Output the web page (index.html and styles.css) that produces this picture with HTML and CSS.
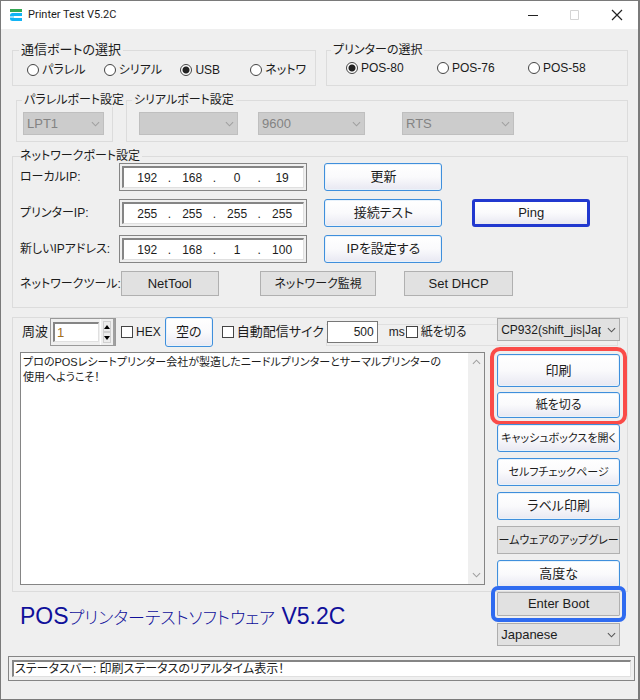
FILE: index.html
```html
<!DOCTYPE html>
<html lang="ja">
<head>
<meta charset="utf-8">
<meta name="viewport" content="width=device-width, initial-scale=1">
<title>Printer Test V5.2C</title>
<link rel="stylesheet" href="styles.css">
</head>
<body>
<div class="window">
  <header class="titlebar">
    <svg class="app-icon" width="12" height="12" viewBox="0 0 12 12" aria-hidden="true">
      <rect x="0" y="0" width="12" height="3" fill="#34a853"/>
      <path d="M2.500 4H12v3H4v2h8v3H2.500A2.500 2.500 0 0 1 0 9.500v-3A2.500 2.500 0 0 1 2.500 4z" fill="#12b4f5"/>
      <path d="M0 7h4v2H0z" fill="#9be0fb"/>
    </svg>
    <h1 class="caption">Printer Test V5.2C</h1>
    <div class="window-buttons">
      <button type="button" class="winbtn" aria-label="最小化"><svg width="12" height="12" viewBox="0 0 12 12"><path d="M1 6.500h10" stroke="#222"/></svg></button>
      <button type="button" class="winbtn" aria-label="最大化" disabled><svg width="12" height="12" viewBox="0 0 12 12"><path d="M1.500 1.500h8v9h-8z" fill="none" stroke="#d4d4d4"/></svg></button>
      <button type="button" class="winbtn" aria-label="閉じる"><svg width="12" height="12" viewBox="0 0 12 12"><path d="M1 1l10 10M11 1L1 11" stroke="#222" stroke-width="1.200"/></svg></button>
    </div>
  </header>

  <main class="content">
    <div class="row row-top">
      <fieldset class="group radios ports">
        <legend>通信ポートの選択</legend>
        <label><input type="radio" name="port">パラレル</label>
        <label><input type="radio" name="port">シリアル</label>
        <label><input type="radio" name="port" checked>USB</label>
        <label><input type="radio" name="port">ネットワ</label>
      </fieldset>
      <fieldset class="group radios printers">
        <legend>プリンターの選択</legend>
        <label><input type="radio" name="printer" checked>POS-80</label>
        <label><input type="radio" name="printer">POS-76</label>
        <label><input type="radio" name="printer">POS-58</label>
      </fieldset>
    </div>

    <div class="row row-ports">
      <fieldset class="group parallel">
        <legend>パラレルポート設定</legend>
        <span class="combo"><select aria-label="パラレルポート" disabled><option>LPT1</option></select><svg class="chevron" viewBox="0 0 10 6"><path d="M1 1l4 4 4-4"/></svg></span>
      </fieldset>
      <fieldset class="group serial">
        <legend>シリアルポート設定</legend>
        <span class="combo"><select aria-label="シリアルポート" disabled><option></option></select><svg class="chevron" viewBox="0 0 10 6"><path d="M1 1l4 4 4-4"/></svg></span>
        <span class="combo baud"><select aria-label="ボーレート" disabled><option>9600</option></select><svg class="chevron" viewBox="0 0 10 6"><path d="M1 1l4 4 4-4"/></svg></span>
        <span class="combo flow"><select aria-label="フロー制御" disabled><option>RTS</option></select><svg class="chevron" viewBox="0 0 10 6"><path d="M1 1l4 4 4-4"/></svg></span>
      </fieldset>
    </div>

    <fieldset class="group network">
      <legend>ネットワークポート設定</legend>
      <div class="net-row">
        <label for="local1">ローカルIP:</label>
        <div class="ip"><div class="ip-inner"><input id="local1" value="192"><i>.</i><input aria-label="ローカルIP 2" value="168"><i>.</i><input aria-label="ローカルIP 3" value="0"><i>.</i><input aria-label="ローカルIP 4" value="19"></div></div>
        <button type="button" class="btn set">更新</button>
      </div>
      <div class="net-row">
        <label for="printer1">プリンターIP:</label>
        <div class="ip"><div class="ip-inner"><input id="printer1" value="255"><i>.</i><input aria-label="プリンターIP 2" value="255"><i>.</i><input aria-label="プリンターIP 3" value="255"><i>.</i><input aria-label="プリンターIP 4" value="255"></div></div>
        <button type="button" class="btn set">接続テスト</button>
        <button type="button" class="btn ping">Ping</button>
      </div>
      <div class="net-row">
        <label for="new1">新しいIPアドレス:</label>
        <div class="ip"><div class="ip-inner"><input id="new1" value="192"><i>.</i><input aria-label="新しいIPアドレス 2" value="168"><i>.</i><input aria-label="新しいIPアドレス 3" value="1"><i>.</i><input aria-label="新しいIPアドレス 4" value="100"></div></div>
        <button type="button" class="btn set">IPを設定する</button>
      </div>
      <div class="tool-row">
        <span>ネットワークツール:</span>
        <button type="button" class="flat">NetTool</button>
        <button type="button" class="flat monitor">ネットワーク監視</button>
        <button type="button" class="flat dhcp">Set DHCP</button>
      </div>
    </fieldset>

    <section class="panel columns">
      <div class="editor">
        <div class="toolbar">
          <label class="times" for="times">周波</label>
          <div class="spinner">
            <input id="times" value="1">
            <div class="arrows">
              <button type="button" aria-label="増やす"><svg width="6" height="4" viewBox="0 0 6 4"><path d="M0 4l3-4 3 4z"/></svg></button>
              <button type="button" aria-label="減らす"><svg width="6" height="4" viewBox="0 0 6 4"><path d="M0 0l3 4 3-4z"/></svg></button>
            </div>
          </div>
          <label class="check hex"><input type="checkbox">HEX</label>
          <button type="button" class="btn clear">空の</button>
          <label class="check auto"><input type="checkbox">自動配信サイク</label>
          <input class="interval" aria-label="自動配信サイクル" value="500">
          <span class="unit">ms</span>
          <label class="check cut"><input type="checkbox">紙を切る</label>
        </div>
        <div class="memo">
          <textarea aria-label="印刷テキスト">プロのPOSレシートプリンター会社が製造したニードルプリンターとサーマルプリンターの
使用へようこそ！</textarea>
          <div class="scrollbar">
            <svg viewBox="0 0 10 6"><path d="M1 5l4-4 4 4"/></svg>
            <svg viewBox="0 0 10 6"><path d="M1 1l4 4 4-4"/></svg>
          </div>
        </div>
      </div>
      <div class="actions">
        <span class="combo active codepage"><select aria-label="コードページ"><option>CP932(shift_jis|Japanese)</option></select><svg class="chevron" viewBox="0 0 10 6"><path d="M1 1l4 4 4-4"/></svg></span>
        <div class="marked">
          <button type="button" class="btn print">印刷</button>
          <button type="button" class="btn cutter">紙を切る</button>
        </div>
        <button type="button" class="btn compact">キャッシュボックスを開く</button>
        <button type="button" class="btn compact">セルフチェックページ</button>
        <button type="button" class="btn">ラベル印刷</button>
        <button type="button" class="flat compact">ームウェアのアップグレー</button>
        <button type="button" class="btn">高度な</button>
      </div>
    </section>

    <section class="bottom columns">
      <h2 class="product">POS<span>プリンターテストソフトウェア</span> V5.2C</h2>
      <div class="boot">
        <button type="button" class="flat enter">Enter Boot</button>
        <span class="combo active"><select aria-label="言語"><option>Japanese</option></select><svg class="chevron" viewBox="0 0 10 6"><path d="M1 1l4 4 4-4"/></svg></span>
      </div>
    </section>
  </main>

  <footer class="status"><output>ステータスバー: 印刷ステータスのリアルタイム表示！</output></footer>
</div>
</body>
</html>
```
FILE: styles.css
```css
* { box-sizing: border-box; }

body {
  margin: 0;
  background: #efefef;
  color: #1c1c1c;
  font: 13px/14px "Liberation Sans", "Noto Sans CJK JP", sans-serif;
  font-feature-settings: "palt";
}

button, input, select, textarea {
  margin: 0;
  padding: 0;
  font: inherit;
  font-feature-settings: inherit;
  color: inherit;
}

.window {
  display: flex;
  flex-direction: column;
  min-height: 100vh;
  border: 1px solid #7a7a7a;
  border-right-width: 2px;
}

.titlebar {
  display: flex;
  align-items: center;
  height: 28px;
  padding-left: 9px;
  background: #fff;
}
.caption {
  flex: 1;
  margin: 0 0 0 6px;
  font: 11px/16px Roboto, sans-serif;
}
.window-buttons { display: flex; }
.winbtn {
  display: grid;
  place-items: center;
  width: 42px;
  height: 28px;
  border: 0;
  background: none;
}

.content { padding: 14px 10px 0 11px; }
.row { display: grid; margin-bottom: 7px; }
.row-top { grid-template-columns: 304fr 302fr; gap: 10px; }
.row-ports { grid-template-columns: 97fr 502fr; gap: 13px; padding-left: 4px; }

.group {
  min-width: 0;
  margin: 0;
  padding: 0;
  border: 1px solid #dcdcdc;
}
legend {
  padding: 0 2px;
  background: #efefef;
  font-size: 12px;
  line-height: 14px;
  white-space: nowrap;
}

.radios { display: grid; height: 43px; font-size: 12px; }
.radios label { display: flex; align-items: center; gap: 3px; white-space: nowrap; }
.ports { grid-template-columns: 77fr 77fr 70fr 65fr; padding-left: 14px; padding-bottom: 3px; }
.ports legend { margin-left: -8px; font-size: 13px; }
.printers { grid-template-columns: repeat(3, 1fr); padding: 0 8px 6px 19px; }
.printers legend { margin-left: -15px; }

input[type="radio"], input[type="checkbox"] {
  flex: none;
  appearance: none;
  width: 12px;
  height: 12px;
  border: 1px solid #444;
  background: #fff;
}
input[type="radio"] { border-radius: 50%; }
input[type="radio"]:checked { background: radial-gradient(circle, #222 3px, #fff 4px); }

.combo { position: relative; display: block; height: 23px; }
.combo select {
  appearance: none;
  display: block;
  width: 100%;
  height: 100%;
  padding: 0 18px 0 3px;
  border: 1px solid #bfbfbf;
  border-radius: 0;
  background: #cccccc;
  color: #838383;
  opacity: 1;
}
.combo.active select { border-color: #adadad; background: #e1e1e1; color: #1c1c1c; }
.codepage { font-size: 12px; }
.chevron {
  position: absolute;
  right: 4px;
  top: 9px;
  width: 9px;
  height: 6px;
  pointer-events: none;
}
.chevron path, .scrollbar path { fill: none; stroke: #a0a0a0; stroke-width: 1.2; }
.active .chevron path { stroke: #555; }

.parallel, .serial { height: 49px; }
.parallel { padding: 5px 8px 0 6px; }
.parallel legend { margin-left: -1px; }
.serial {
  display: grid;
  grid-template-columns: 99fr 20fr 107fr 37fr 112fr 113fr;
  padding: 5px 0 0 12px;
}
.serial legend { margin-left: -7px; }
.baud { grid-column: 3; }
.flow { grid-column: 5; }

.network { height: 159px; margin-bottom: 9px; padding: 0 7px; }
.network legend { padding-left: 0; }
.net-row {
  display: grid;
  grid-template-columns: 99fr 188fr 18fr 118fr 30fr 118fr 30fr;
  align-items: center;
  height: 28px;
  margin-bottom: 8px;
  font-size: 12px;
  white-space: nowrap;
}
.net-row .btn { height: 28px; font-size: 13px; }
.set { grid-column: 4; }
.ping { grid-column: 6; }
.ip { height: 28px; padding: 2px; border: 1px solid #858585; }
.ip-inner {
  display: flex;
  align-items: center;
  height: 22px;
  padding: 0 0 0 3px;
  border: 2px solid #858585;
  border-right: 1px solid #e0e0e0;
  border-bottom: 1px solid #e0e0e0;
  background: #fff;
}
.ip input { flex: 1; width: 0; min-width: 0; border: 0; background: none; text-align: center; }
.ip i { flex: none; width: 4px; font-style: normal; }

.tool-row {
  display: grid;
  grid-template-columns: 99fr 98fr 42fr 116fr 28fr 110fr 107fr;
  align-items: center;
  height: 25px;
  font-size: 12px;
  white-space: nowrap;
}
.tool-row .flat { font-size: 13px; }
.tool-row .monitor { grid-column: 4; font-size: 12px; }
.dhcp { grid-column: 6; }

.btn {
  display: block;
  overflow: hidden;
  border: 1px solid #3f8fdc;
  border-radius: 3px;
  background: linear-gradient(#ffffff, #fafafc 50%, #e8e8f2);
  box-shadow: inset 0 0 0 1px #e8f2fb;
  white-space: nowrap;
}
.flat {
  display: flex;
  align-items: center;
  justify-content: center;
  overflow: hidden;
  height: 25px;
  border: 1px solid #b0b0b0;
  background: #e1e1e1;
  white-space: nowrap;
}
.ping { border: 3px solid #2138cf; box-shadow: none; }

.columns {
  display: grid;
  grid-template-columns: 466fr 123fr;
  column-gap: 12px;
  padding: 0 7px;
}
.panel { border: 1px solid #dcdcdc; }

.editor { display: flex; flex-direction: column; min-width: 0; padding-bottom: 6px; }
.toolbar {
  position: relative;
  display: flex;
  align-items: center;
  height: 28px;
  margin-bottom: 6px;
  white-space: nowrap;
}
.toolbar::before {
  content: "";
  position: absolute;
  z-index: -1;
  left: 306px;
  right: -133px;
  top: 6px;
  bottom: 0;
  border: 1px solid #dfdfdf;
}
.times { width: 30px; padding-left: 2px; }
.spinner { display: flex; width: 66px; height: 28px; border: 1px solid #9a9a9a; background: #efefef; }
.spinner > input {
  flex: 1;
  width: 0;
  height: 20px;
  margin: 3px 1px 3px 2px;
  padding-left: 2px;
  border: 2px solid #858585;
  border-right: 1px solid #e0e0e0;
  border-bottom: 1px solid #e0e0e0;
  background: #fff;
  color: #a07020;
}
.arrows { display: flex; flex-direction: column; width: 15px; padding: 2px; border-right: 2px solid #a0a0a0; border-left: 1px solid #fff; }
.arrows button { display: grid; flex: 1; place-items: center; border: 1px solid #cfcfcf; background: #ececec; }
.check { display: flex; align-items: center; gap: 3px; background: #efefef; }
.hex { margin-left: 5px; font-size: 12px; }
.clear { width: 48px; height: 30px; margin-left: 4px; }
.auto { width: 105px; margin-left: 9px; }
.interval { width: 51px; height: 22px; padding-right: 3px; border: 1px solid #777; background: #fff; font-size: 12px; text-align: right; }
.unit { padding-left: 11px; background: #efefef; font-size: 12px; }
.cut { margin-left: 1px; padding-right: 8px; font-size: 12px; }

.memo { display: flex; flex: 1; border: 1px solid #858585; background: #fff; }
.memo textarea {
  flex: 1;
  min-width: 0;
  padding: 2px 0 2px 2px;
  border: 0;
  outline: 0;
  background: none;
  font-size: 11px;
  line-height: 15px;
  resize: none;
  overflow: hidden;
}
.scrollbar {
  display: flex;
  flex-direction: column;
  align-items: center;
  justify-content: space-between;
  width: 16px;
  padding: 6px 0;
  background: #efefef;
}
.scrollbar svg { width: 9px; height: 6px; }

.actions { display: flex; flex-direction: column; gap: 6px; min-width: 0; padding-bottom: 3px; }
.actions > .btn, .actions > .flat { height: 28px; }
.actions > .compact { font-size: 11px; }
.marked {
  display: grid;
  gap: 5px;
  margin-top: 7px;
  border-radius: 3px;
  outline: 4px solid #fa4b48;
  outline-offset: 3px;
}
.print { height: 33px; }
.cutter { height: 26px; font-size: 12px; }

.bottom { padding: 0 8px; }
.product {
  margin: 0;
  padding: 8px 0 0;
  color: #10109a;
  font-size: 23px;
  font-weight: 400;
  line-height: 32px;
  white-space: nowrap;
}
.product span { font-size: 17px; font-weight: 300; }
.boot { display: grid; gap: 7px; min-width: 0; }
.enter {
  height: 24px;
  border-radius: 1px;
  outline: 4px solid #2f6bf0;
  outline-offset: 2px;
}

.status {
  margin: 10px 3px 0 7px;
  padding: 3px;
  border: 1px solid #858585;
}
.status output {
  display: block;
  height: 17px;
  padding-left: 1px;
  border: 2px solid #858585;
  border-right: 1px solid #e0e0e0;
  border-bottom: 1px solid #e0e0e0;
  background: #fff;
  font-size: 12px;
}
```
